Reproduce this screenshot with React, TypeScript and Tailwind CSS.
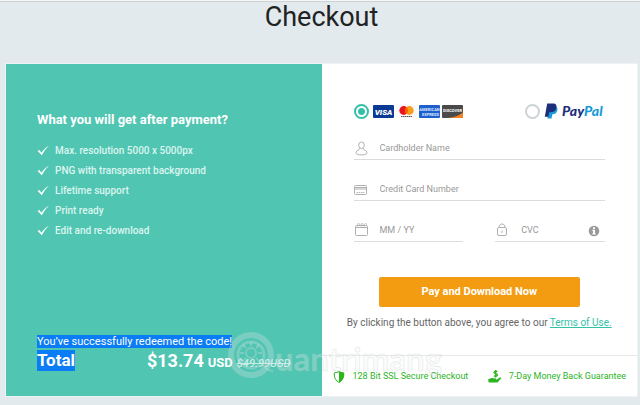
import type { ReactNode } from "react";

const perks = [
  "Max. resolution 5000 x 5000px",
  "PNG with transparent background",
  "Lifetime support",
  "Print ready",
  "Edit and re-download",
];

function CheckIcon() {
  return (
    <svg className="h-3 w-3 text-white" viewBox="0 0 12 12" fill="currentColor">
      <path d="M0.6 6 L2.2 4.9 L4.4 7.4 Q7.4 2.8 12 .4 Q7.8 4.4 4.8 10.2 Z" />
    </svg>
  );
}

function UserIcon() {
  return (
    <svg className="h-4 w-4" viewBox="0 0 16 16" fill="none" stroke="currentColor">
      <ellipse cx="7.5" cy="4.2" rx="2.8" ry="3.3" />
      <path d="M6 7.2 C6 9.2 2 9 2 11.8 C2 14.6 13 14.6 13 11.8 C13 9 9 9.2 9 7.2" />
    </svg>
  );
}

function CardIcon() {
  return (
    <svg className="h-4 w-4" viewBox="0 0 16 16" fill="none" stroke="currentColor">
      <rect x=".5" y="3.5" width="12" height="9" rx="1" />
      <path d="M.5 5.5h12M.5 7h12" />
      <path d="M2.5 10.5h8" strokeDasharray="1.5 .8" />
    </svg>
  );
}

function CalendarIcon() {
  return (
    <svg className="h-4 w-4" viewBox="0 0 16 16" fill="none" stroke="currentColor">
      <rect x="1.5" y="2.5" width="12" height="10" rx="1" />
      <path d="M1.5 4.5h12" />
      <path d="M3.5 3.5V1.5a1 1 0 0 1 2 0V3M7 3.5V1.5a1 1 0 0 1 2 0V3M10.5 3.5V1.5a1 1 0 0 1 2 0V3" strokeWidth=".8" />
    </svg>
  );
}

function LockIcon() {
  return (
    <svg className="h-4 w-4" viewBox="0 0 16 16" fill="none" stroke="currentColor">
      <rect x="2.5" y="4.5" width="9" height="8" rx="1.5" />
      <path d="M4 4.5 C4 -.2 10 -.2 10 4.5M7 7.5v2.5" />
    </svg>
  );
}

function InfoIcon() {
  return (
    <svg className="h-3 w-3" viewBox="0 0 12 12">
      <circle cx="6" cy="6" r="5.3" fill="#9a9a9a" />
      <path d="M5 2.3h2v1.6H5zM4.4 4.8H7v3.4h.7v1.2H4.4V8.2H5V6h-.6z" fill="#fff" />
    </svg>
  );
}

function ShieldIcon() {
  return (
    <svg className="h-3 w-3 shrink-0 text-[#2cb51f]" viewBox="0 0 12 12">
      <path d="M6 .8 L10.8 2 C11 6.4 9.4 9.8 6 11.4 C2.6 9.8 1 6.4 1.2 2 Z" fill="none" stroke="currentColor" />
      <path d="M6 .6 L11 2 C11.2 6.4 9.6 10 6 11.7 Z" fill="currentColor" />
    </svg>
  );
}

function RefundIcon() {
  return (
    <svg className="h-4 w-4 shrink-0 text-[#2cb51f]" viewBox="0 0 16 16" fill="none" stroke="currentColor">
      <path d="M10.4 2.6 C8.6 1.6 7 2.4 7 3.4 C7 5 10.4 4.4 10.4 6 C10.4 7.2 8.4 7.6 6.8 6.8M8.7 1v7.4" strokeWidth="1.3" />
      <path d="M1 10.4 L4.4 9 L9 9.4 L9.4 10.8 L13.2 8.2 L14.4 9 L10.6 13.4 L1.8 13.4 Z" fill="currentColor" stroke="none" />
    </svg>
  );
}

function CardBrands() {
  return (
    <svg className="h-[13px] w-[90px]" viewBox="0 0 90 13" role="img" aria-label="Visa, Mastercard, American Express, Discover">
      <rect width="21" height="13" rx="1" fill="#0b3a94" />
      <text x="10.5" y="9.6" textAnchor="middle" fontSize="8" fontWeight="900" fontStyle="italic" fill="#fff">VISA</text>
      <rect x="23" width="21" height="13" rx="1" fill="#fafafa" />
      <circle cx="30.7" cy="5.5" r="4.4" fill="#e8171f" />
      <circle cx="36.3" cy="5.5" r="4.4" fill="#f79e1b" />
      <path d="M33.5 2.1a4.4 4.4 0 0 1 0 6.8a4.4 4.4 0 0 1 0-6.8" fill="#ff5f00" />
      <path d="M28 11.5h11" stroke="#555" strokeDasharray="1.5 .5" />
      <rect x="46" width="21" height="13" rx="1" fill="#1d5fcb" />
      <text x="56.5" y="6.3" textAnchor="middle" fontSize="4" fontWeight="700" fill="#dce9ff">AMERICAN</text>
      <text x="57.5" y="10.8" textAnchor="middle" fontSize="4" fontWeight="700" fill="#dce9ff">EXPRESS</text>
      <rect x="69" width="21" height="13" rx="1" fill="#4a4a4a" />
      <path d="M90 7.5V13H75Q84 12 90 7.5" fill="#f58220" />
      <text x="79.5" y="7.3" textAnchor="middle" fontSize="4" fontWeight="700" fill="#fff">DISCOVER</text>
    </svg>
  );
}

function PayPalLogo() {
  return (
    <svg className="h-4 w-[61px]" viewBox="0 0 61 16" role="img" aria-label="PayPal">
      <path d="M5 3.2h5c3.4 0 4 2.4 3 5c-.8 2.4-2.6 3-4.6 3L7.5 15.6H3.5z" fill="#179bd7" />
      <path d="M3.2 .4h5.6c3.4 0 4.2 2 3.4 4.8C11.4 8.2 9.2 9.2 6.4 9.2H5.2L4.4 13.8H.8z" fill="#1c2f7c" />
      <text x="18" y="13" fontFamily="Lato, sans-serif" fontSize="14" fontWeight="900" fontStyle="italic" fill="#1c2f7c">
        Pay<tspan fill="#179bd7">Pal</tspan>
      </text>
    </svg>
  );
}

function Field({ id, label, icon, children }: { id: string; label: string; icon: ReactNode; children?: ReactNode }) {
  return (
    <div className="flex h-6 w-full min-w-0 items-center border-b border-[#dcdcdc] pt-[3px] text-[#b0b0b0]">
      <label htmlFor={id} className="shrink-0" aria-label={label}>{icon}</label>
      <input
        id={id}
        type="text"
        placeholder={label}
        className="ml-[10px] w-full min-w-0 bg-transparent text-[9px] text-gray-700 outline-none placeholder:text-[#999]"
      />
      {children}
    </div>
  );
}

function Watermark() {
  return (
    <svg className="pointer-events-none absolute bottom-[14px] left-[221px] h-[54px] w-[220px]" viewBox="0 0 220 54" aria-hidden="true">
      <g fill="none" stroke="#dfe5e5" strokeOpacity=".3">
        <circle cx="24" cy="27" r="20" strokeWidth="6" />
        <circle cx="24" cy="27" r="13" strokeWidth="3" />
        <circle cx="24" cy="25" r="5" strokeWidth="2" />
        <path d="M24 14v4M24 32v4M13 25h4M31 25h4M16 17l3 3M32 17l-3 3M16 33l3-3M32 33l-3-3M36 37q4 6 10 6" strokeWidth="2" />
      </g>
      <text x="48" y="43" fontFamily="Lato, sans-serif" fontSize="33" fontWeight="700" fill="#eef1f1" fillOpacity=".3" stroke="#b5bcbc" strokeOpacity=".35" strokeWidth=".6">uantrimang</text>
    </svg>
  );
}

export default function App() {
  return (
    <div className="min-h-screen border-t border-[#f5f7f7] bg-[#e3eaed] pr-[3px] pb-2 pl-[6px] font-['Roboto',sans-serif] shadow-[inset_0_1px_#cdd3d5]">
      <h1 className="pt-px text-center text-[27px] leading-[30px] text-[#222]">Checkout</h1>

      <main className="relative mt-8 grid min-h-[332px] grid-cols-2 shadow-[0_0_0_1px_#eef2f3]">
        {/* Order summary */}
        <section className="flex min-w-0 flex-col justify-between bg-[#50c5b2] px-[31px] pt-12 pb-6 text-white">
          <div>
            <h2 className="text-[13px] leading-4 font-bold">What you will get after payment?</h2>
            <ul className="mt-[13px] text-[10px] leading-5 font-medium text-[#dcf5f0]">
              {perks.map((perk) => (
                <li key={perk} className="flex items-center gap-[6px]">
                  <CheckIcon />
                  {perk}
                </li>
              ))}
            </ul>
          </div>
          <div className="whitespace-nowrap">
            <p className="w-fit bg-[#0a7cf5] text-[11px] leading-[13px]">You’ve successfully redeemed the code!</p>
            <div className="mt-[2px] flex items-center justify-between">
              <span className="bg-[#0a7cf5] text-[17px] leading-[21px] font-bold">Total</span>
              <span className="flex items-baseline gap-1">
                <strong className="text-[18px] leading-[21px] font-bold">$13.74</strong>
                <strong className="text-[13px] font-bold">USD</strong>
                <s className="text-[11px] font-medium text-[#c9ece6] italic">$49.99USD</s>
              </span>
            </div>
          </div>
        </section>

        {/* Payment form */}
        <form className="flex min-w-0 flex-col bg-white" onSubmit={(e) => e.preventDefault()}>
          <div className="flex-1 px-8 pt-[39px]">
            <div className="flex items-center justify-between">
              <label className="flex items-center gap-1">
                <input type="radio" name="method" defaultChecked className="h-[15px] w-[15px] appearance-none rounded-full border-2 border-[#34bfa9] bg-white checked:bg-[radial-gradient(circle,#34bfa9_3px,white_4px)]" />
                <CardBrands />
              </label>
              <label className="flex items-center gap-1">
                <input type="radio" name="method" className="h-[15px] w-[15px] appearance-none rounded-full border-2 border-[#ccd3d5] bg-white" />
                <PayPalLogo />
              </label>
            </div>

            <div className="mt-[17px] flex flex-col gap-[17px]">
              <Field id="name" label="Cardholder Name" icon={<UserIcon />} />
              <Field id="number" label="Credit Card Number" icon={<CardIcon />} />
              <div className="flex gap-8">
                <Field id="expiry" label="MM / YY" icon={<CalendarIcon />} />
                <Field id="cvc" label="CVC" icon={<LockIcon />}>
                  <button type="button" aria-label="About the CVC" className="mr-[5px]">
                    <InfoIcon />
                  </button>
                </Field>
              </div>
            </div>

            <button type="submit" className="mx-auto mt-[35px] block h-[30px] w-4/5 rounded-[2px] bg-[#f39c12] text-[11px] font-bold text-white">
              Pay and Download Now
            </button>
            <p className="-mx-2 mt-[10px] text-center text-[10px] leading-3 whitespace-nowrap text-[#666]">
              By clicking the button above, you agree to our{" "}
              <a href="#terms" className="text-[#34bfa9] underline">Terms of Use.</a>
            </p>
          </div>

          <footer className="flex h-[41px] items-center justify-between border-t border-[#e8e8e8] px-[11px] pt-px text-[9px] whitespace-nowrap text-[#2cb51f]">
            <span className="flex items-center gap-2">
              <ShieldIcon />
              128 Bit SSL Secure Checkout
            </span>
            <span className="flex items-center gap-[6px]">
              <RefundIcon />
              7-Day Money Back Guarantee
            </span>
          </footer>
        </form>

        <Watermark />
      </main>
    </div>
  );
}
